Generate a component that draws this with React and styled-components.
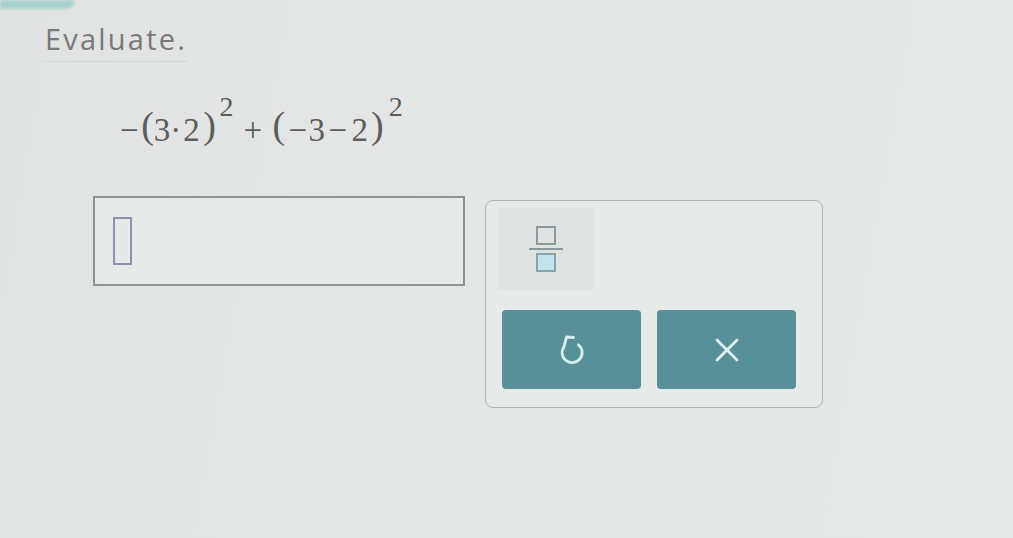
import React from 'react';
import styled, { createGlobalStyle } from 'styled-components';

const GlobalStyle = createGlobalStyle`
  html, body {
    margin: 0;
    padding: 0;
    background: #e3e6e4;
  }
  body {
    width: 1013px;
    height: 538px;
    overflow: hidden;
    font-family: "Open Sans", "Noto Sans", sans-serif;
  }
`;

const Page = styled.div`
  width: 1013px;
  height: 538px;
  background: linear-gradient(100deg, #e1e3e2 0%, #e4e7e5 45%, #e6eae8 100%);
`;

const Tab = styled.div`
  width: 75px;
  height: 9px;
  background: #a9d2cf;
  border-bottom-right-radius: 10px;
  filter: blur(1.5px);
`;

const Header = styled.div`
  padding: 10px 0 0 45px;
`;

const Title = styled.span`
  display: inline-block;
  font-size: 29px;
  letter-spacing: 2.2px;
  color: #767a79;
  padding-bottom: 3px;
  border-bottom: 1px solid #d2d6d4;
`;

const Expression = styled.div`
  margin: 44px 0 0 120px;
  height: 44px;
  line-height: 44px;
  font-family: "Liberation Serif", "DejaVu Serif", serif;
  font-size: 33px;
  color: #5a5d5c;
  white-space: pre;
  display: flex;
  align-items: baseline;
`;

const Part = styled.span`
  margin-left: ${p => p.left || 0}px;
`;

const Paren = styled.span`
  font-size: 38px;
  position: relative;
  top: -3px;
  margin-left: ${p => p.left || 0}px;
`;

const Sup = styled.span`
  font-size: 28px;
  position: relative;
  top: -25px;
  margin-left: ${p => p.left || 0}px;
`;

const Work = styled.div`
  display: flex;
  align-items: flex-start;
  margin: 46px 0 0 93px;
  gap: 20px;
`;

const AnswerBox = styled.div`
  width: 350px;
  height: 86px;
  border: 2px solid #8f9291;
  background: #e6eae8;
  display: flex;
  align-items: center;
  padding-left: 18px;
  box-sizing: content-box;
`;

const Cursor = styled.div`
  width: 15px;
  height: 44px;
  border: 2px solid #8e91b0;
  background: #e6e9ea;
`;

const Keypad = styled.div`
  margin-top: 4px;
  width: 338px;
  height: 208px;
  border: 1px solid #aeb3b1;
  border-radius: 8px;
  background: #e6eae8;
  box-sizing: border-box;
  padding: 7px 0 0 11px;
  display: flex;
  flex-direction: column;
`;

const KeyRow = styled.div`
  display: flex;
  gap: ${p => p.gap || 0}px;
  padding-left: ${p => p.indent || 0}px;
  margin-top: ${p => p.top || 0}px;
`;

const FracKey = styled.div`
  width: 96px;
  height: 82px;
  background: #dfe3e2;
  display: flex;
  align-items: center;
  justify-content: center;
`;

const ActionKey = styled.button`
  width: 139px;
  height: 79px;
  border: none;
  border-radius: 4px;
  background: #58909a;
  display: flex;
  align-items: center;
  justify-content: center;
  padding: 0;
`;

const FractionIcon = () => (
  <svg width="38" height="50" viewBox="0 0 38 50">
    <rect x="10" y="3" width="18" height="17" fill="none" stroke="#8c999c" strokeWidth="2" />
    <line x1="2" y1="25" x2="36" y2="25" stroke="#8c999c" strokeWidth="2" />
    <rect x="10" y="30" width="18" height="17" fill="#c3e4ee" stroke="#86a6ae" strokeWidth="2" />
  </svg>
);

const UndoIcon = () => (
  <svg width="26" height="31" viewBox="0 0 26 31" fill="none" stroke="#d6eef0" strokeWidth="2.8" strokeLinecap="round" strokeLinejoin="round">
    <path d="M14.5 3.5 L7.5 3 L5 12.8 A10 10 0 1 0 19.4 10.8" />
  </svg>
);

const CloseIcon = () => (
  <svg width="26" height="26" viewBox="0 0 26 26" stroke="#e2f0f2" strokeWidth="2.8" strokeLinecap="round">
    <line x1="3" y1="3" x2="23" y2="23" />
    <line x1="23" y1="3" x2="3" y2="23" />
  </svg>
);

export default function App() {
  return (
    <Page>
      <GlobalStyle />
      <Tab />
      <Header>
        <Title>Evaluate.</Title>
      </Header>
      <Expression>
        <Part>−</Part>
        <Paren left={2.5}>(</Paren>
        <Part>3·</Part>
        <Part left={2}>2</Part>
        <Paren left={3.5}>)</Paren>
        <Sup left={3.5}>2</Sup>
        <Part left={10}>+</Part>
        <Paren left={10.5}>(</Paren>
        <Part left={3.3}>−</Part>
        <Part left={1.4}>3</Part>
        <Part left={3.5}>−</Part>
        <Part left={4.4}>2</Part>
        <Paren left={3}>)</Paren>
        <Sup left={5}>2</Sup>
      </Expression>
      <Work>
        <AnswerBox>
          <Cursor />
        </AnswerBox>
        <Keypad>
          <KeyRow indent={1}>
            <FracKey>
              <FractionIcon />
            </FracKey>
          </KeyRow>
          <KeyRow gap={16} indent={5} top={20}>
            <ActionKey aria-label="undo">
              <UndoIcon />
            </ActionKey>
            <ActionKey aria-label="clear">
              <CloseIcon />
            </ActionKey>
          </KeyRow>
        </Keypad>
      </Work>
    </Page>
  );
}
